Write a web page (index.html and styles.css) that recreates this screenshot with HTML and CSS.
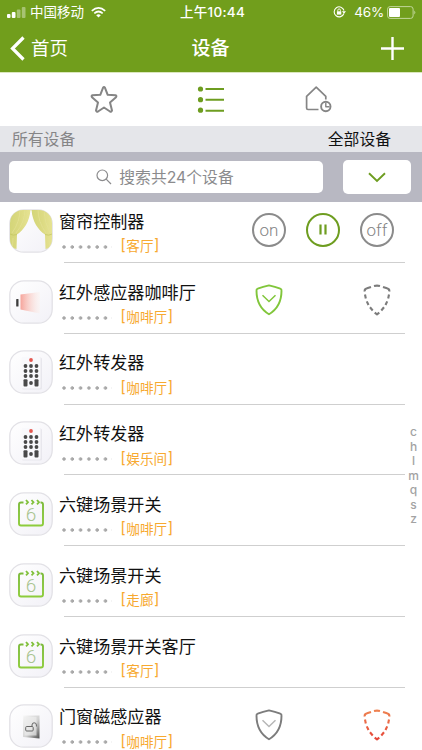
FILE: index.html
```html
<!DOCTYPE html>
<html lang="zh-CN">
<head>
<meta charset="utf-8">
<title>设备</title>
<link rel="stylesheet" href="styles.css">
</head>
<body>
<svg class="defs" width="0" height="0">
  <defs>
    <linearGradient id="tile" x1="0" y1="0" x2="1" y2="1"><stop offset="0" stop-color="#fff"/><stop offset="1" stop-color="#f2f1f7"/></linearGradient>
    <linearGradient id="cloth" x1="0" y1="0" x2="1" y2="0"><stop offset="0" stop-color="#d3d578"/><stop offset=".5" stop-color="#dcda82"/><stop offset="1" stop-color="#e6e393"/></linearGradient>
    <linearGradient id="beam" x1="0" y1="0" x2="1" y2="0"><stop offset="0" stop-color="#f6a49b"/><stop offset="1" stop-color="#fdf0ea" stop-opacity=".3"/></linearGradient>
    <linearGradient id="door" x1="0" y1="0" x2="1" y2="1"><stop offset="0" stop-color="#f8f8f8"/><stop offset=".55" stop-color="#d2d2d2"/><stop offset="1" stop-color="#505050"/></linearGradient>
    <linearGradient id="warm" x1="0" y1="0" x2="0" y2="1"><stop offset="0" stop-color="#ee8150"/><stop offset="1" stop-color="#e54638"/></linearGradient>
    <linearGradient id="calgreen" x1="0" y1="0" x2="0" y2="1"><stop offset="0" stop-color="#7dbb3c"/><stop offset="1" stop-color="#8dcc3c"/></linearGradient>
    <clipPath id="tileclip"><rect x="1" y="1" width="42" height="42" rx="13"/></clipPath>
  </defs>
  <symbol id="frame" viewBox="0 0 44 44"><rect x=".8" y=".8" width="42.4" height="42.4" rx="14" fill="url(#tile)" stroke="#e2e1e6" stroke-width="1.3"/></symbol>
  <symbol id="curtain" viewBox="0 0 44 44">
    <use href="#frame"/>
    <g clip-path="url(#tileclip)">
      <path d="M0 0H21.500C21 12 15 21 8 25.500L7.500 40 0 38Z" fill="url(#cloth)"/>
      <path d="M22.500 0H44V38L36.500 40 36 25.500C29 21 23 12 22.500 0Z" fill="url(#cloth)"/>
      <path d="M11 0Q11 13 3 24M16 0Q16 13 7 24M29 0Q29 13 37 24M35 0Q35 13 41 24M4 29L3.500 38M40 29L40.500 38" fill="none" stroke="#e4e195" stroke-width=".7"/>
      <path d="M1 25Q4 27 8 25.500M43 25Q40 27 36 25.500" fill="none" stroke="#c3c562" stroke-width=".7"/>
    </g>
  </symbol>
  <symbol id="infrared" viewBox="0 0 44 44"><use href="#frame"/><path d="M11.500 14.500L31 12V33.500L11.500 29.500Z" fill="url(#beam)"/><rect x="7.200" y="19" width="2.300" height="7.500" rx=".6" fill="#3d3d3d"/></symbol>
  <symbol id="remote" viewBox="0 0 44 44">
    <use href="#frame"/>
    <rect x="13" y="7.500" width="20" height="32" rx="1.500" fill="#e8e7ed"/><rect x="12.500" y="7" width="19" height="31.500" rx="1.500" fill="#f9f9fc"/>
    <circle cx="22" cy="10" r="1.900" fill="#e4574f"/>
    <g fill="#494949"><circle cx="16.500" cy="16" r="1.900"/><circle cx="22" cy="16" r="1.900"/><circle cx="27.500" cy="16" r="1.900"/><circle cx="16.500" cy="21" r="1.900"/><circle cx="22" cy="21" r="1.900"/><circle cx="27.500" cy="21" r="1.900"/><circle cx="16.500" cy="26" r="1.900"/><circle cx="22" cy="26" r="1.900"/><circle cx="27.500" cy="26" r="1.900"/><circle cx="22" cy="33" r="1.900"/><rect x="14.500" y="29.300" width="4" height="7.200" rx="1"/><rect x="25.500" y="29.300" width="4" height="7.200" rx="1"/></g>
  </symbol>
  <symbol id="scene" viewBox="0 0 44 44">
    <use href="#frame"/>
    <path d="M14.500 10.500H12Q10 10.500 10 12.500V31.500Q10 33.500 12 33.500H32Q34 33.500 34 31.500V12.500Q34 10.500 32 10.500H31.500" fill="none" stroke="url(#calgreen)" stroke-width="1.900"/>
    <path d="M17 8L19 10.300 17 12.300M22.500 8L24.500 10.300 22.500 12.300M28 8L30 10.300 28 12.300" fill="none" stroke="#82c13c" stroke-width="1.800"/>
  </symbol>
  <symbol id="doorlock" viewBox="0 0 44 44"><use href="#frame"/><path d="M14 11.500H30.500V34.500L14 33Z" fill="url(#door)"/><path d="M15.500 13H27.500V31.500H15.500Z" fill="#eee" opacity=".65"/><rect x="16.700" y="22.500" width="7.500" height="4.500" rx="1" fill="none" stroke="#666" stroke-width="1"/><path d="M23 22.500V21A2.200 2.200 0 0 1 27.400 21V22.500" fill="none" stroke="#666" stroke-width="1"/></symbol>
  <symbol id="shield" viewBox="0 0 28 32"><path d="M14 1.400Q20 2.700 25.300 4.700Q26.800 5.200 26.500 6.800C26.500 17 22 25.500 14 30.300C6 25.500 1.500 17 1.500 6.800Q1.200 5.200 2.700 4.700Q8 2.700 14 1.400Z" fill="none" stroke="currentColor" stroke-width="1.900" stroke-linejoin="round"/><path d="M7.500 11.200L14 17.500 20.500 11.200" fill="none" stroke-width="1.500"/></symbol>
  <symbol id="dashed" viewBox="0 0 28 32">
    <path d="M11 2Q14 1.200 17 2M20 3L24 4.300Q26.700 5 26.300 7.500M26 10.500L25.200 14.500M24.200 17.400L22.500 21M21 23.300L18.300 26.500M16.300 28.600L14 30.300 11.700 28.600M9.700 26.500L7 23.300M5.500 21L3.800 17.400M2.800 14.500L2 10.500M1.700 7.500Q1.300 5 4 4.300L8 3" fill="none" stroke-width="2.100" stroke-linejoin="round"/>
  </symbol>
</svg>

<header class="header">
  <div class="status">
    <div class="carrier">
      <svg width="19" height="11" viewBox="0 0 19 11" fill="#fff"><rect x="0" y="7" width="3.500" height="4" rx="1"/><rect x="4.800" y="5" width="3.700" height="6" rx="1"/><g opacity=".38"><rect x="9.800" y="2.500" width="3.700" height="8.500" rx="1"/><rect x="14.800" y="0" width="3.700" height="11" rx="1"/></g></svg>
      <span class="carrier-name">中国移动</span>
      <svg width="15" height="11" viewBox="0 0 15 11" fill="none" stroke="#fff" stroke-width="1.700"><path d="M.8 3.800Q7.500-2 14.200 3.800M3.300 6.300Q7.500 2.700 11.700 6.300"/><path d="M5.200 8.200Q7.500 6.300 9.800 8.200L7.500 10.500Z" fill="#fff" stroke="none"/></svg>
    </div>
    <div class="clock">上午10:44</div>
    <div class="power">
      <svg width="13" height="12" viewBox="0 0 13 12" fill="none" stroke="#fff"><path d="M10.900 7.500A5 5 0 1 1 11 4.500" stroke-width="1.100"/><path d="M8.900 5.200H13L11 7.800Z" fill="#fff" stroke="none"/><rect x="3.900" y="5.300" width="4.400" height="3.300" fill="#fff" stroke="none"/><path d="M4.800 5.500V4.200A1.300 1.300 0 0 1 7.400 4.200V5.500" stroke-width=".9"/></svg>
      <span class="percent">46%</span>
      <svg width="29" height="13" viewBox="0 0 29 13"><rect x=".6" y=".6" width="25.500" height="11.800" rx="2.500" fill="none" stroke="#c1d69a" stroke-width="1"/><rect x="2" y="2" width="11" height="9" rx="1" fill="#fff"/><path d="M27.300 4.500Q29.300 6.500 27.300 8.500Z" fill="#c1d69a"/></svg>
    </div>
  </div>
  <nav class="nav">
    <div class="back">
      <svg width="16" height="25" viewBox="0 0 16 25" fill="none" stroke="#fff" stroke-width="3.200"><path d="M13.500 1.500L2.500 12.500 13.500 23.500"/></svg>
      <span>首页</span>
    </div>
    <h1>设备</h1>
    <div class="add"><svg width="23" height="23" viewBox="0 0 23 23" stroke="#fff" stroke-width="2.400"><path d="M0 11.500H23M11.500 0V23"/></svg></div>
  </nav>
</header>

<div class="tabs">
  <svg width="28" height="28" viewBox="0 0 28 28" fill="none" stroke="#858585" stroke-width="2" stroke-linejoin="round"><path d="M13 1.800Q14 .3 15 1.800L17.700 8.800 25.500 9.300Q27 9.800 26 11.300L20 16.500 22 24.500Q21.500 26.200 20 25.500L14 21.500 8 25.500Q6.500 26.200 6 24.500L8 16.500 2 11.300Q1 9.800 2.500 9.300L10.300 8.800Z"/></svg>
  <svg width="28" height="28" viewBox="0 0 28 28" fill="#6e9d20"><circle cx="3.500" cy="3" r="2.600"/><circle cx="3.500" cy="13.700" r="2.600"/><circle cx="3.500" cy="24.200" r="2.600"/><path d="M8.500 2H27V4H8.500ZM8.500 12.800H27V14.800H8.500ZM8.500 23.700H27V25.700H8.500Z"/></svg>
  <svg width="28" height="28" viewBox="0 0 28 28" fill="none" stroke="#858585" stroke-width="1.700" stroke-linejoin="round"><path d="M14.500 23.500H4Q2.600 23.500 2.600 22V10.300L12.200 1.200 21.800 10.300V13.500"/><circle cx="21.800" cy="20.500" r="4.700" stroke-width="1.900"/><path d="M21.800 16.700V20.700H25.500" stroke-width="1.400"/></svg>
</div>

<div class="filter"><span class="scope">所有设备</span><span class="all">全部设备</span></div>

<div class="search">
  <div class="field"><svg width="16" height="16" viewBox="0 0 16 16" fill="none" stroke="#8b8b8d" stroke-width="1.200"><circle cx="6.300" cy="6.300" r="5.300"/><path d="M10.200 10.200L15 15"/></svg><span>搜索共24个设备</span></div>
  <div class="expand"><svg width="18" height="11" viewBox="0 0 18 11" fill="none" stroke="#6e9d20" stroke-width="1.900"><path d="M1 1.300L9 9 17 1.300"/></svg></div>
</div>

<main class="content">
  <ul class="devices">
    <li class="row"><svg class="icon"><use href="#curtain"/></svg><div class="body"><div class="name">窗帘控制器</div><div class="meta"><i class="dots"></i><span class="room"><b>[</b>客厅<b>]</b></span></div></div>
      <div class="controls"><span class="round">on</span><span class="round active"><svg width="8" height="11" viewBox="0 0 8 11"><path d="M1.500 .5V10.500M6.500 .5V10.500" stroke="#6e9d20" stroke-width="2.200"/></svg></span><span class="round off">off</span></div></li>
    <li class="row"><svg class="icon"><use href="#infrared"/></svg><div class="body"><div class="name">红外感应器咖啡厅</div><div class="meta"><i class="dots"></i><span class="room"><b>[</b>咖啡厅<b>]</b></span></div></div>
      <div class="controls"><svg class="guard armed"><use href="#shield"/></svg><svg class="guard open"><use href="#dashed"/></svg></div></li>
    <li class="row"><svg class="icon"><use href="#remote"/></svg><div class="body"><div class="name">红外转发器</div><div class="meta"><i class="dots"></i><span class="room"><b>[</b>咖啡厅<b>]</b></span></div></div></li>
    <li class="row"><svg class="icon"><use href="#remote"/></svg><div class="body"><div class="name">红外转发器</div><div class="meta"><i class="dots"></i><span class="room"><b>[</b>娱乐间<b>]</b></span></div></div></li>
    <li class="row"><svg class="icon"><use href="#scene"/><text x="22" y="28.500" class="six">6</text></svg><div class="body"><div class="name">六键场景开关</div><div class="meta"><i class="dots"></i><span class="room"><b>[</b>咖啡厅<b>]</b></span></div></div></li>
    <li class="row"><svg class="icon"><use href="#scene"/><text x="22" y="28.500" class="six">6</text></svg><div class="body"><div class="name">六键场景开关</div><div class="meta"><i class="dots"></i><span class="room"><b>[</b>走廊<b>]</b></span></div></div></li>
    <li class="row"><svg class="icon"><use href="#scene"/><text x="22" y="28.500" class="six">6</text></svg><div class="body"><div class="name">六键场景开关客厅</div><div class="meta"><i class="dots"></i><span class="room"><b>[</b>客厅<b>]</b></span></div></div></li>
    <li class="row"><svg class="icon"><use href="#doorlock"/></svg><div class="body"><div class="name">门窗磁感应器</div><div class="meta"><i class="dots"></i><span class="room"><b>[</b>咖啡厅<b>]</b></span></div></div>
      <div class="controls"><svg class="guard idle"><use href="#shield"/></svg><svg class="guard alert"><use href="#dashed"/></svg></div></li>
  </ul>
  <div class="index"><span>c</span><span>h</span><span>l</span><span>m</span><span>q</span><span>s</span><span>z</span></div>
</main>
</body>
</html>
```
FILE: styles.css
```css
* { box-sizing: border-box; }
html, body { margin: 0; height: 750px; overflow: hidden; }
body { background: #fff; font-family: Inter, "Noto Sans CJK SC", sans-serif; color: #111; display: flex; flex-direction: column; }
svg { display: block; flex: none; }
.defs { position: absolute; }
.header { height: 72px; flex: none; background: #719e1c; color: #fff; }
.status { height: 24px; display: grid; grid-template-columns: 1fr auto 1fr; align-items: center; padding: 0 6px 0 7px; font-size: 13.5px; line-height: 24px; }
.carrier, .power { display: flex; align-items: center; }
.carrier { gap: 4px; }
.carrier svg:last-child { margin-left: 3px; }
.clock { font-weight: 500; letter-spacing: .3px; padding-left: 2px; }
.power { justify-content: flex-end; }
.percent { margin: 0 3px 0 8px; font-size: 13.5px; letter-spacing: -.2px; }
.nav { height: 48px; display: grid; grid-template-columns: 1fr auto 1fr; align-items: center; padding: 0 18px 0 10px; font-size: 18.500px; }
.back { display: flex; align-items: center; gap: 5px; line-height: 46px; }
.nav h1 { margin: 0; font-size: 19px; font-weight: 500; line-height: 46px; padding: 2px 0 0 7px; }
.add { display: flex; justify-content: flex-end; }
.tabs { height: 54px; flex: none; display: flex; justify-content: space-between; align-items: center; padding: 0 90px; border-top: 1px solid #dbe7bd; }
.filter { height: 26px; flex: none; background: #e5e6ea; display: flex; justify-content: space-between; align-items: center; padding: 2px 31px 0 12px; font-size: 15.8px; line-height: 24px; }
.scope { color: #858587; }
.search { height: 50px; flex: none; background: #b8b8c2; display: flex; justify-content: space-between; align-items: center; padding: 0 11px 0 9px; }
.field { width: 314px; height: 32px; border-radius: 5px; background: #fff; display: flex; align-items: center; justify-content: center; gap: 7px; color: #8b8b8d; font-size: 15.8px; line-height: 32px; padding-right: 2px; }
.field span { padding-top: 1px; }
.expand { width: 68px; height: 34px; border-radius: 5px; background: #fff; display: flex; align-items: center; justify-content: center; }
.content { flex: 1; display: flex; min-height: 0; }
.devices { list-style: none; margin: 0; padding: 0 0 0 9px; width: 405px; flex: none; }
.row { height: 70.8px; display: flex; align-items: flex-end; padding-bottom: 10.300px; background: linear-gradient(#cfcfcf, #cfcfcf) 55px 100% / 341px 1.200px no-repeat; }
.row:first-child { height: 61.1px; }
.icon { width: 44px; height: 44px; }
.six { font: 300 19px Roboto, sans-serif; fill: #a9c48f; text-anchor: middle; }
.body { margin-left: 6px; width: 181px; flex: none; height: 44px; }
.name { font-size: 17.1px; line-height: 26px; white-space: nowrap; }
.meta { display: flex; align-items: center; height: 24px; }
.dots { width: 50px; height: 4px; margin-left: 3px; background: radial-gradient(circle at 2px 2px, #a8a8a8 1.400px, transparent 2px) 0 0 / 8.300px 4px repeat-x; }
.room { display: flex; color: #f7a92f; font-size: 13.6px; line-height: 23px; margin-left: 9px; white-space: nowrap; }
.room b { font: 400 14.5px/22px Roboto, sans-serif; margin-right: 1.500px; }
.room b:last-child { margin: 0 0 0 1.500px; }
.controls { flex: none; width: 142px; margin-left: 12px; height: 44px; display: flex; align-items: center; justify-content: space-between; }
.round { width: 34px; height: 34px; margin-bottom: 2px; border: 2px solid #8b8b8b; border-radius: 50%; display: flex; align-items: center; justify-content: center; color: #858585; font: 300 17px Roboto, sans-serif; letter-spacing: .1px; }
.round.off { padding-top: 1px; }
.round.active { border-color: #6e9d20; }
.guard { width: 28px; height: 32px; margin: 0 3px 3px; color: #7c7c7c; }
.guard.armed { color: #81c63b; stroke: #81c63b; }
.guard.idle { stroke: #b7b7b7; }
.guard.open { stroke: #7c7c7c; }
.guard.alert { stroke: url(#warm); }
.index { width: 17px; padding: 223px 0 0 0; display: flex; flex-direction: column; align-items: center; color: #a3a3a3; font-size: 12px; font-weight: 500; line-height: 14.500px; }
```
